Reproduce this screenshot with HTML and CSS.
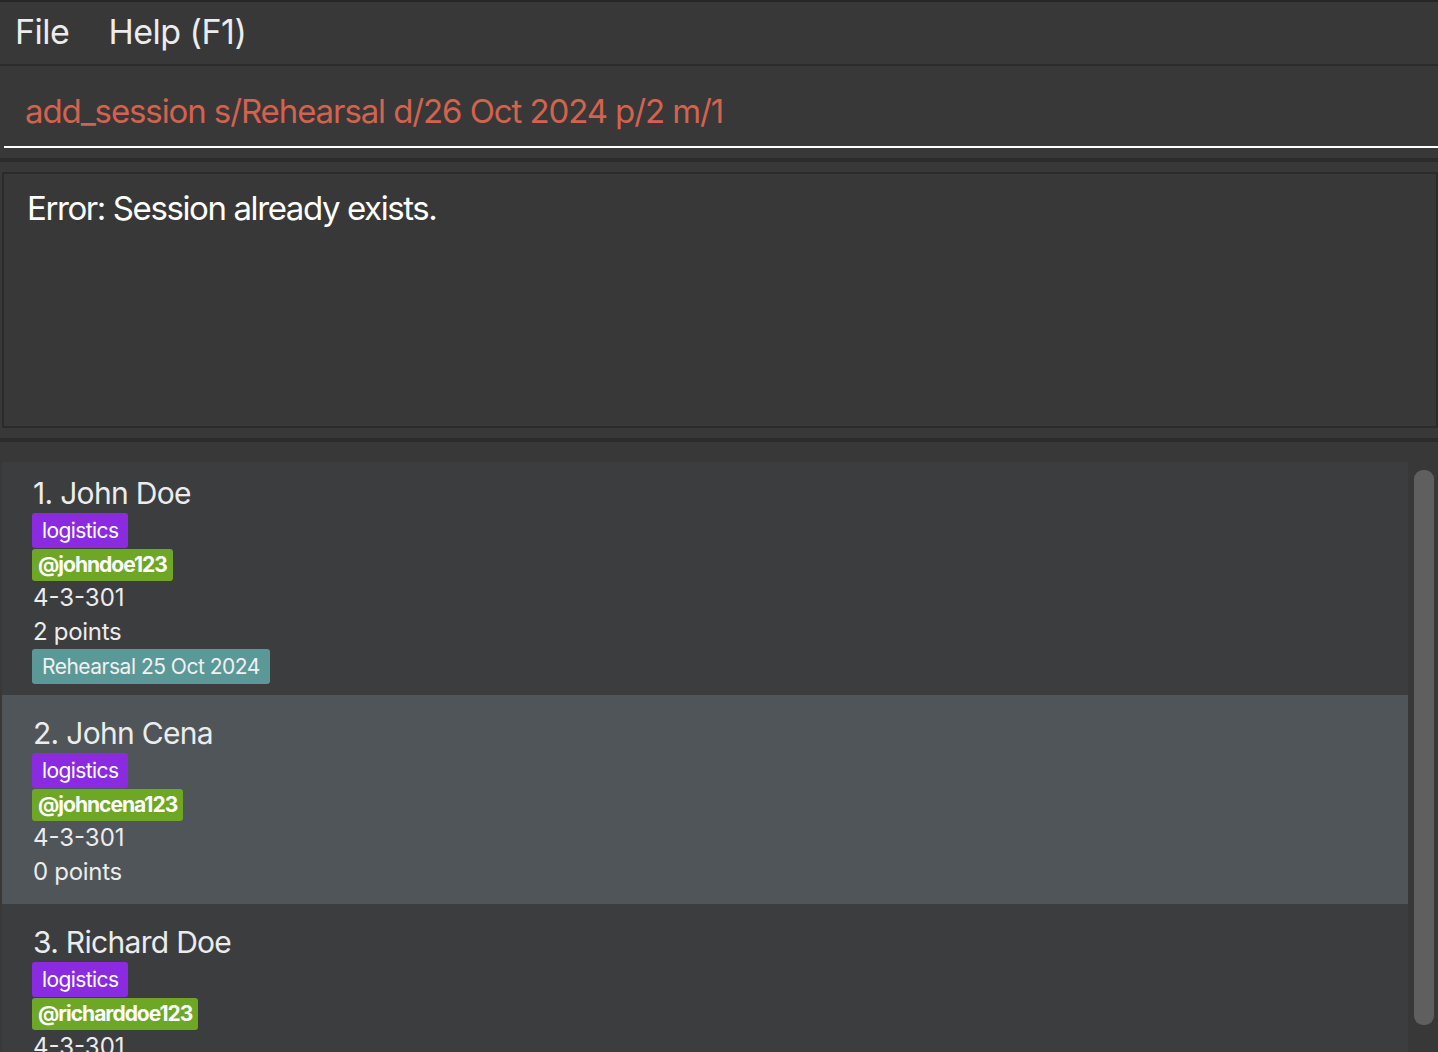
FILE: index.html
```html
<!DOCTYPE html>
<html>
<head>
<meta charset="utf-8">
<link rel="stylesheet" href="styles.css">
</head>
<body>
<div class="app">
  <div class="menubar">
    <span class="menu-item">File</span>
    <span class="menu-item">Help (F1)</span>
  </div>
  <div class="command">
    <div class="command-text">add_session s/Rehearsal d/26 Oct 2024 p/2 m/1</div>
  </div>
  <div class="split"><div class="split-line"></div></div>
  <div class="result">
    <div class="result-box">Error: Session already exists.</div>
  </div>
  <div class="split split-b"><div class="split-line"></div></div>
  <div class="list-area">
    <div class="list">
      <div class="card">
        <div class="name">1. John Doe</div>
        <span class="tag role">logistics</span>
        <span class="tag tele">@johndoe123</span>
        <div class="line">4-3-301</div>
        <div class="line">2 points</div>
        <div class="sessions">
          <span class="tag session">Rehearsal 25 Oct 2024</span>
        </div>
      </div>
      <div class="card selected">
        <div class="name">2. John Cena</div>
        <span class="tag role">logistics</span>
        <span class="tag tele">@johncena123</span>
        <div class="line">4-3-301</div>
        <div class="line">0 points</div>
        <div class="sessions"></div>
      </div>
      <div class="card">
        <div class="name">3. Richard Doe</div>
        <span class="tag role">logistics</span>
        <span class="tag tele">@richarddoe123</span>
        <div class="line">4-3-301</div>
        <div class="line">0 points</div>
        <div class="sessions"></div>
      </div>
    </div>
    <div class="scrollbar"><div class="thumb"></div></div>
  </div>
</div>
</body>
</html>
```

FILE: styles.css
```css
html, body {
  margin: 0;
  padding: 0;
  width: 1438px;
  height: 1052px;
  overflow: hidden;
  background: #383838;
  font-family: "Inter", "Noto Sans", sans-serif;
}
.app {
  display: flex;
  flex-direction: column;
  height: 1052px;
}
.menubar {
  height: 62px;
  border-top: 2px solid #262626;
  border-bottom: 2px solid #2b2b2b;
  display: flex;
  align-items: center;
  padding-left: 15px;
  gap: 39px;
  background: #383838;
}
.menu-item {
  color: #ececec;
  font-size: 34px;
  letter-spacing: -0.5px;
  margin-top: -3px;
}
.command {
  height: 80px;
  display: flex;
  align-items: center;
  padding-left: 25px;
  border-bottom: 2px solid #ffffff;
  margin-left: 4px;
}
.command-text {
  color: #d3624f;
  font-size: 33px;
  letter-spacing: -1.1px;
  margin-left: -4px;
  padding-top: 10px;
}
.split {
  height: 24px;
  display: flex;
  flex-direction: column;
  justify-content: center;
}
.split-line {
  height: 4px;
  background: #2c2c2c;
}
.result {
  padding-left: 2px;
}
.result-box {
  border: 2px solid #2b2b2b;
  padding: 14px 0 0 23px;
  color: #ffffff;
  font-size: 33px;
  letter-spacing: -1.4px;
  box-sizing: content-box;
  height: 238px;
}
.split-b {
  height: 34px;
  justify-content: flex-start;
  padding-top: 10px;
  box-sizing: border-box;
}
.list-area {
  flex: 1;
  display: flex;
  padding-left: 2px;
  overflow: hidden;
}
.list {
  flex: 1;
  display: flex;
  flex-direction: column;
  margin-top: -7px;
}
.card {
  background: #3c3d3f;
  padding: 20px 0 11px 30px;
  display: flex;
  flex-direction: column;
  align-items: flex-start;
}
.card.selected {
  background: #4f5558;
}
.name {
  color: #ececec;
  font-size: 30px;
  line-height: 36px;
  letter-spacing: -0.7px;
  margin-left: 1px;
}
.tag {
  display: inline-block;
  color: #ffffff;
  border-radius: 3px;
  font-size: 21px;
  line-height: 35px;
  padding: 0 10px;
  letter-spacing: -0.6px;
}
.tag.role {
  background: #8a2be2;
  margin-top: 2px;
}
.tag.tele {
  background: #6ea726;
  font-weight: 700;
  padding: 0 6px;
  font-size: 21px;
  line-height: 32px;
  margin-top: 1px;
  letter-spacing: -1px;
}
.sessions {
  min-height: 4px;
  display: flex;
}
.tag.session {
  background: #5b9898;
  color: #f0f0f0;
  line-height: 35px;
  letter-spacing: -0.5px;
}
.line {
  color: #ececec;
  font-size: 24px;
  line-height: 34px;
  letter-spacing: 0px;
  margin-left: 1px;
}
.line + .line {
  letter-spacing: -0.3px;
}
.scrollbar {
  width: 30px;
  background: #383838;
  display: flex;
  justify-content: center;
  padding-top: 8px;
}
.thumb {
  width: 20px;
  height: 555px;
  background: #5f5f5f;
  border-radius: 9px;
  margin-left: 2px;
}
```
